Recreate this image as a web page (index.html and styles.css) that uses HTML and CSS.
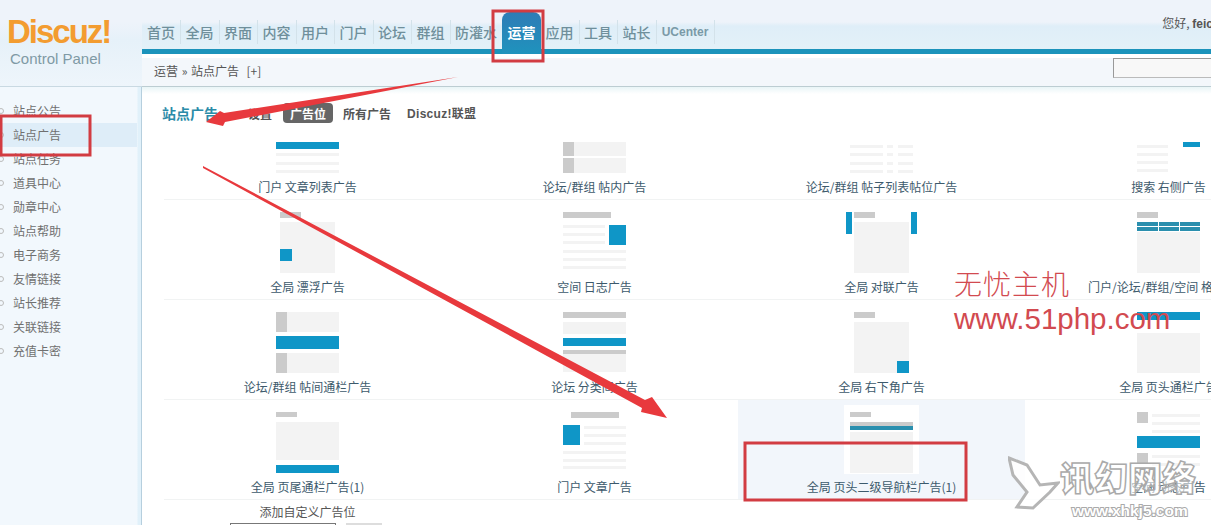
FILE: index.html
```html
<!DOCTYPE html>
<html lang="en">
<head>
  <meta charset="UTF-8" />
  <title>Discuz! Control Panel</title>
  <link rel="stylesheet" href="styles.css">
</head>
<body>
  <div class="page">

    <!-- top bar -->
    <header class="topbar">
      <div class="logo">
        <div class="logoName">Discuz!</div>
        <div class="logoSub">Control Panel</div>
      </div>
      <nav class="topnav">
        <a>首页</a><a>全局</a><a>界面</a><a>内容</a><a>用户</a><a>门户</a><a>论坛</a><a>群组</a><a>防灌水</a><a class="active">运营</a><a>应用</a><a>工具</a><a>站长</a><a class="latin">UCenter</a>
      </nav>
      <div class="greeting">您好, <b>feic</b></div>
    </header>

    <div class="body">
      <!-- side menu -->
      <aside class="sidebar">
        <ul>
          <li>站点公告</li>
          <li class="current">站点广告</li>
          <li>站点任务</li>
          <li>道具中心</li>
          <li>勋章中心</li>
          <li>站点帮助</li>
          <li>电子商务</li>
          <li>友情链接</li>
          <li>站长推荐</li>
          <li>关联链接</li>
          <li>充值卡密</li>
        </ul>
      </aside>

      <main class="main">
        <div class="crumbs">
          <span class="crumbText">运营 » 站点广告 &nbsp;[+]</span>
          <input class="crumbSearch" type="text" />
        </div>

        <div class="content">
          <div class="tabs">
            <h3>站点广告</h3>
            <a class="tabFirst">设置</a>
            <a class="pill">广告位</a>
            <a>所有广告</a>
            <a class="tabLast">Discuz!联盟</a>
          </div>

          <div class="adGrid">
            <!-- row 1 -->
            <div class="cell short">
              <svg width="63" height="32"><rect class="b" width="63" height="7"/><rect class="l" y="11" width="63" height="3"/><rect class="l" y="20" width="63" height="3"/><rect class="l" y="28" width="63" height="3"/></svg>
              <p>门户 文章列表广告</p>
            </div>
            <div class="cell short">
              <svg width="63" height="32"><rect class="g" width="11" height="14"/><rect class="l" x="11" width="52" height="14"/><rect class="g" y="16" width="11" height="15"/><rect class="l" x="11" y="16" width="52" height="15"/></svg>
              <p>论坛/群组 帖内广告</p>
            </div>
            <div class="cell short">
              <svg width="63" height="32"><rect class="l" y="3" width="33" height="3"/><rect class="l" x="37" y="3" width="6" height="3"/><rect class="l" x="48" y="3" width="15" height="3"/><rect class="l" y="11" width="33" height="3"/><rect class="l" x="37" y="11" width="6" height="3"/><rect class="l" x="48" y="11" width="15" height="3"/><rect class="l" y="20" width="33" height="3"/><rect class="l" x="37" y="20" width="6" height="3"/><rect class="l" x="48" y="20" width="15" height="3"/><rect class="l" y="28" width="33" height="3"/><rect class="l" x="37" y="28" width="6" height="3"/><rect class="l" x="48" y="28" width="15" height="3"/></svg>
              <p>论坛/群组 帖子列表帖位广告</p>
            </div>
            <div class="cell short">
              <svg width="63" height="32"><rect class="l" y="3" width="31" height="3"/><rect class="l" y="11" width="31" height="3"/><rect class="l" y="19" width="31" height="3"/><rect class="l" y="27" width="31" height="3"/><rect class="b" x="46" width="17" height="5"/></svg>
              <p>搜索 右侧广告</p>
            </div>

            <!-- row 2 -->
            <div class="cell">
              <svg width="63" height="62"><rect class="g" x="4" width="21" height="6"/><rect class="l" x="4" y="10" width="55" height="51"/><rect class="b" x="4" y="37" width="12" height="12"/></svg>
              <p>全局 漂浮广告</p>
            </div>
            <div class="cell">
              <svg width="63" height="62"><rect class="g" width="48" height="6"/><rect class="l" y="13" width="42" height="3"/><rect class="l" y="21" width="42" height="3"/><rect class="l" y="29" width="42" height="3"/><rect class="b" x="46" y="13" width="17" height="20"/><rect class="l" y="38" width="63" height="3"/><rect class="l" y="46" width="63" height="3"/><rect class="l" y="54" width="63" height="3"/></svg>
              <p>空间 日志广告</p>
            </div>
            <div class="cell">
              <svg width="63" height="62"><rect class="b" x="-4" width="6" height="22"/><rect class="g" x="4" width="21" height="6"/><rect class="l" x="4" y="10" width="55" height="51"/><rect class="b" x="61" width="6" height="22"/></svg>
              <p>全局 对联广告</p>
            </div>
            <div class="cell">
              <svg width="63" height="62"><rect class="g" width="21" height="6"/><rect class="t" y="10" width="63" height="9"/><rect class="w" y="14" width="63" height="1"/><rect class="w" x="21" y="10" width="1" height="9"/><rect class="w" x="42" y="10" width="1" height="9"/><rect class="l" y="20" width="63" height="41"/></svg>
              <p>门户/论坛/群组/空间 格子广告</p>
            </div>

            <!-- row 3 -->
            <div class="cell">
              <svg width="63" height="62"><rect class="g" width="11" height="20"/><rect class="l" x="11" width="52" height="20"/><rect class="b" y="24" width="63" height="13"/><rect class="g" y="41" width="11" height="20"/><rect class="l" x="11" y="41" width="52" height="20"/></svg>
              <p>论坛/群组 帖间通栏广告</p>
            </div>
            <div class="cell">
              <svg width="63" height="62"><rect class="g" width="63" height="6"/><rect class="l" y="10" width="63" height="12"/><rect class="b" y="26" width="63" height="8"/><rect class="g" y="38" width="63" height="4"/><rect class="l" y="42" width="63" height="18"/></svg>
              <p>论坛 分类间广告</p>
            </div>
            <div class="cell">
              <svg width="63" height="62"><rect class="g" x="4" width="21" height="6"/><rect class="l" x="4" y="10" width="55" height="51"/><rect class="b" x="47" y="49" width="12" height="12"/></svg>
              <p>全局 右下角广告</p>
            </div>
            <div class="cell">
              <svg width="63" height="62"><rect class="b" width="63" height="8"/><rect class="l" y="21" width="63" height="40"/></svg>
              <p>全局 页头通栏广告</p>
            </div>

            <!-- row 4 -->
            <div class="cell">
              <svg width="63" height="62"><rect class="g" width="21" height="5"/><rect class="l" y="10" width="63" height="38"/><rect class="b" y="53" width="63" height="8"/></svg>
              <p>全局 页尾通栏广告(1)</p>
            </div>
            <div class="cell">
              <svg width="63" height="62"><rect class="g" x="8" width="48" height="6"/><rect class="b" y="13" width="17" height="20"/><rect class="l" x="21" y="14" width="42" height="3"/><rect class="l" x="21" y="22" width="42" height="3"/><rect class="l" x="21" y="30" width="42" height="3"/><rect class="l" y="39" width="63" height="3"/><rect class="l" y="47" width="63" height="3"/><rect class="l" y="54" width="63" height="3"/></svg>
              <p>门户 文章广告</p>
            </div>
            <div class="cell hovered">
              <svg width="63" height="62"><rect class="g" width="21" height="5"/><rect class="g" y="10" width="63" height="4"/><rect class="t" y="14" width="63" height="4"/><rect class="l" y="20" width="63" height="41"/></svg>
              <p>全局 页头二级导航栏广告(1)</p>
            </div>
            <div class="cell">
              <svg width="63" height="62"><rect class="g" width="11" height="11"/><rect class="l" x="15" y="2" width="48" height="3"/><rect class="l" x="15" y="10" width="48" height="3"/><rect class="l" x="15" y="18" width="48" height="3"/><rect class="b" y="24" width="63" height="12"/><rect class="g" y="41" width="11" height="11"/><rect class="l" x="15" y="43" width="48" height="3"/><rect class="l" x="15" y="51" width="48" height="3"/></svg>
              <p>空间 动态广告</p>
            </div>
          </div>

          <div class="addForm">
            <p>添加自定义广告位</p>
            <div class="addRow"><input type="text" /><button></button></div>
          </div>
        </div>
      </main>
    </div>

    <!-- screenshot annotations -->
    <svg class="marks" width="1211" height="525">
      <rect class="redBox" x="493" y="11" width="50" height="50"/>
      <rect class="redBox" x="1" y="116" width="89" height="39"/>
      <rect class="redBox" x="745" y="443" width="221" height="57"/>
      <polygon class="arrow" points="458,77 225,122 223,126 206,122 220,111 224,113"/>
      <polygon class="arrow" points="203,166 645,400 652,397 667,418 641,412 642,408 203,168"/>
    </svg>
    <div class="stamp">
      <div class="stampCn">无忧主机</div>
      <div class="stampUrl">www.51php.com</div>
    </div>
    <div class="brand">
      <svg class="brandBird" width="52" height="56"><polygon points="1,2 19,9 32,29 50,27 42,36 25,52 9,51 19,36 5,19"/></svg>
      <div class="brandText">
        <div class="brandCn">讯幻网络</div>
        <div class="brandUrl">www.xhkj5.com</div>
      </div>
    </div>
  </div>
</body>
</html>
```

FILE: styles.css
```css
html, body {
  margin: 0;
  padding: 0;
  height: 100%;
  overflow: hidden;
  background: #fff;
  font-family: "Noto Sans CJK SC", "Liberation Sans", sans-serif;
  font-size: 12px;
  color: #666;
}

.page {
  position: relative;
  width: 1211px;
  height: 525px;
  overflow: hidden;
}

/* top bar */
.topbar {
  display: flex;
  height: 49px;
  background: linear-gradient(#eef3fa 0, #eef3fa 22px, #dfeef8 26px, #e3f1f8 100%);
  position: relative;
}

.logo {
  width: 142px;
  flex: none;
  font-family: "Liberation Sans", sans-serif;
  padding-left: 7px;
  box-sizing: border-box;
  height: 87px;
  background: linear-gradient(#eef3fa 0, #eef3fa 22px, #e6f1f9 40px, #eef5fb 100%);
  border-bottom: 1px solid #c9d9e2;
  z-index: 1;
}

.logoName {
  margin-top: 13px;
  font-size: 33px;
  line-height: 38px;
  font-weight: bold;
  letter-spacing: -2px;
  color: #f39c30;
}

.logoSub {
  margin: 0 0 0 3px;
  font-size: 15px;
  line-height: 16px;
  color: #7f9aa5;
}

.topnav {
  display: flex;
  align-items: flex-end;
  height: 54px;
  padding-left: 5px;
  z-index: 2;
}

.topnav a {
  display: block;
  padding: 0 5px 0 4.5px;
  margin: 0 0 10px;
  font-size: 14px;
  line-height: 24px;
  height: 24px;
  font-weight: 500;
  color: #6f8f9b;
  border-right: 1px solid #d3e2ea;
  white-space: nowrap;
  width: 28px;
  text-align: center;
}

.topnav a:first-child {
  padding-left: 0;
}

.topnav a:nth-child(9) {
  width: 42px;
  border-right: 0;
}

.topnav a.active {
  width: 39px;
  height: 42px;
  line-height: 40px;
  margin: 0 0 0 0;
  padding: 0;
  border-right: 0;
  color: #fff;
  font-weight: 700;
  border-radius: 8px 8px 0 0;
  background: linear-gradient(#2e7cb6, #1f93bd);
}

.topnav a.latin {
  width: 48px;
  font-family: "Liberation Sans", sans-serif;
  font-size: 12px;
  font-weight: bold;
  color: #7a9aa7;
}

.greeting {
  margin-left: auto;
  margin-right: -2px;
  padding-top: 14px;
  line-height: 18px;
  color: #555;
  white-space: nowrap;
}

.greeting b {
  font-family: "Liberation Sans", sans-serif;
}

.body {
  display: flex;
  height: 476px;
}

/* side menu */
.sidebar {
  width: 142px;
  flex: none;
  box-sizing: border-box;
  padding-top: 50px;
  background: linear-gradient(to right, #f2f8fd 0, #f2f8fd 137px, #e1f1fa 138px, #e1f1fa 100%);
  border-right: 1px solid #b6cfde;
}

.sidebar ul {
  margin: 0;
  padding: 0;
  list-style: none;
}

.sidebar li {
  position: relative;
  width: 137px;
  box-sizing: border-box;
  height: 24px;
  line-height: 24px;
  padding-left: 13px;
  color: #707070;
}

.sidebar li::before {
  content: "";
  position: absolute;
  left: -2px;
  top: 9px;
  width: 4px;
  height: 4px;
  border: 1px solid #bbb;
  border-radius: 50%;
}

.sidebar li.current {
  background: #deedf8;
}

/* main column */
.main {
  flex: 1;
  min-width: 0;
}

.crumbs {
  display: flex;
  justify-content: space-between;
  height: 38px;
  box-sizing: border-box;
  padding: 4px 0 0 12px;
  background: linear-gradient(#fff 4px, #f3f7fb 4px);
  border-top: 5px solid #1b93bb;
  border-bottom: 1px solid #bccdd2;
  color: #555;
}

.crumbText {
  line-height: 18px;
  margin-top: 4px;
  word-spacing: 1px;
}

.crumbSearch {
  width: 98px;
  height: 20px;
  box-sizing: border-box;
  margin: 0;
  flex: none;
  background: #f8f8f8;
  border: 1px solid #999;
  border-right: 0;
  border-bottom-color: #bbb;
}

.content {
  padding: 16px 0 0 22px;
  background: linear-gradient(#e9f5f7, #fff 7px);
  height: 438px;
  box-sizing: border-box;
  overflow: hidden;
}

.tabs {
  display: flex;
  align-items: center;
  height: 20px;
  font-weight: 700;
  color: #555;
}

.tabs h3 {
  margin: 0 0 0 -2px;
  width: 86px;
  font-size: 14px;
  color: #2b8ba8;
  font-weight: 700;
}

.tabs a {
  line-height: 22px;
  height: 20px;
  margin-right: 10px;
}

.tabs .tabFirst {
  margin-right: 11px;
}

.tabs .pill {
  padding: 0 5px;
  margin-right: 10px;
  background: #666;
  color: #fff;
  border-radius: 4px;
  width: 40px;
  text-align: center;
}

.tabs .tabLast {
  margin-left: 6px;
  font-family: "Liberation Sans", "Noto Sans CJK SC", sans-serif;
  letter-spacing: 0.3px;
}

/* ad position grid */
.adGrid {
  display: grid;
  grid-template-columns: repeat(4, 287px);
  grid-template-rows: 62px 100px 100px 100px;
  margin-top: 15px;
  width: 1148px;
}

.cell {
  box-sizing: border-box;
  border-bottom: 1px solid #f1f3f3;
  text-align: center;
  padding-top: 12px;
}

.cell.short {
  padding-top: 4px;
}

.cell svg {
  display: block;
  margin: 0 auto;
  overflow: visible;
}

.cell p {
  margin: 4px 0 0;
  line-height: 18px;
  color: #3d5a6c;
  white-space: nowrap;
}

.cell.short p {
  margin-top: 4px;
}

.cell.hovered {
  background: #f2f6fb;
}

.cell.hovered svg {
  background: #fff;
  box-shadow: 6px -7px #fff, -6px -7px #fff, 6px 0 #fff, -6px 0 #fff;
}

.g { fill: #cbcbcb; }
.l { fill: #f3f3f3; }
.b { fill: #0f96c7; }
.t { fill: #2a8fae; }
.w { fill: #fff; }

.addForm {
  width: 287px;
  text-align: center;
  color: #555;
}

.addForm p {
  margin: 3px 0 0;
  line-height: 18px;
}

.addRow {
  display: flex;
  gap: 10px;
  margin-top: 2px;
  padding-left: 66px;
}

.addRow input {
  width: 106px;
  height: 20px;
  box-sizing: border-box;
  margin: 0;
  border: 1px solid #777;
}

.addRow button {
  width: 36px;
  height: 20px;
  border: 0;
  background: #ddd;
}

/* annotations on top of the page */
.marks {
  position: absolute;
  top: 0;
  left: 0;
  z-index: 5;
}

.redBox {
  fill: none;
  stroke: #d23c42;
  stroke-width: 3;
}

.arrow {
  fill: #e8393d;
}

.stamp {
  position: absolute;
  left: 954px;
  top: 263px;
  z-index: 6;
  color: #d24a50;
  white-space: nowrap;
}

.stampCn {
  font-family: "Noto Sans CJK SC", sans-serif;
  font-weight: 300;
  font-size: 28px;
  line-height: 40px;
  letter-spacing: 1px;
}

.stampUrl {
  font-family: "Liberation Sans", sans-serif;
  font-size: 29.5px;
  line-height: 32px;
}

.brand {
  position: absolute;
  left: 1008px;
  top: 456px;
  display: flex;
  z-index: 6;
}

.brandBird polygon {
  fill: rgba(255, 255, 255, 0.8);
  stroke: #b5b5b5;
  stroke-width: 3;
}

.brandText {
  margin-left: 0;
  text-align: left;
}

.brandCn {
  font-family: "Noto Sans CJK SC", sans-serif;
  font-weight: 900;
  font-size: 34px;
  line-height: 42px;
  color: rgba(255, 255, 255, 0.6);
  -webkit-text-stroke: 1.5px #aaa;
  white-space: nowrap;
}

.brandUrl {
  margin: 5px 0 0 12px;
  font-family: "Liberation Sans", sans-serif;
  font-weight: bold;
  font-size: 15.5px;
  line-height: 16px;
  color: #fff;
  -webkit-text-stroke: 2px #aaa;
  paint-order: stroke fill;
}
```
